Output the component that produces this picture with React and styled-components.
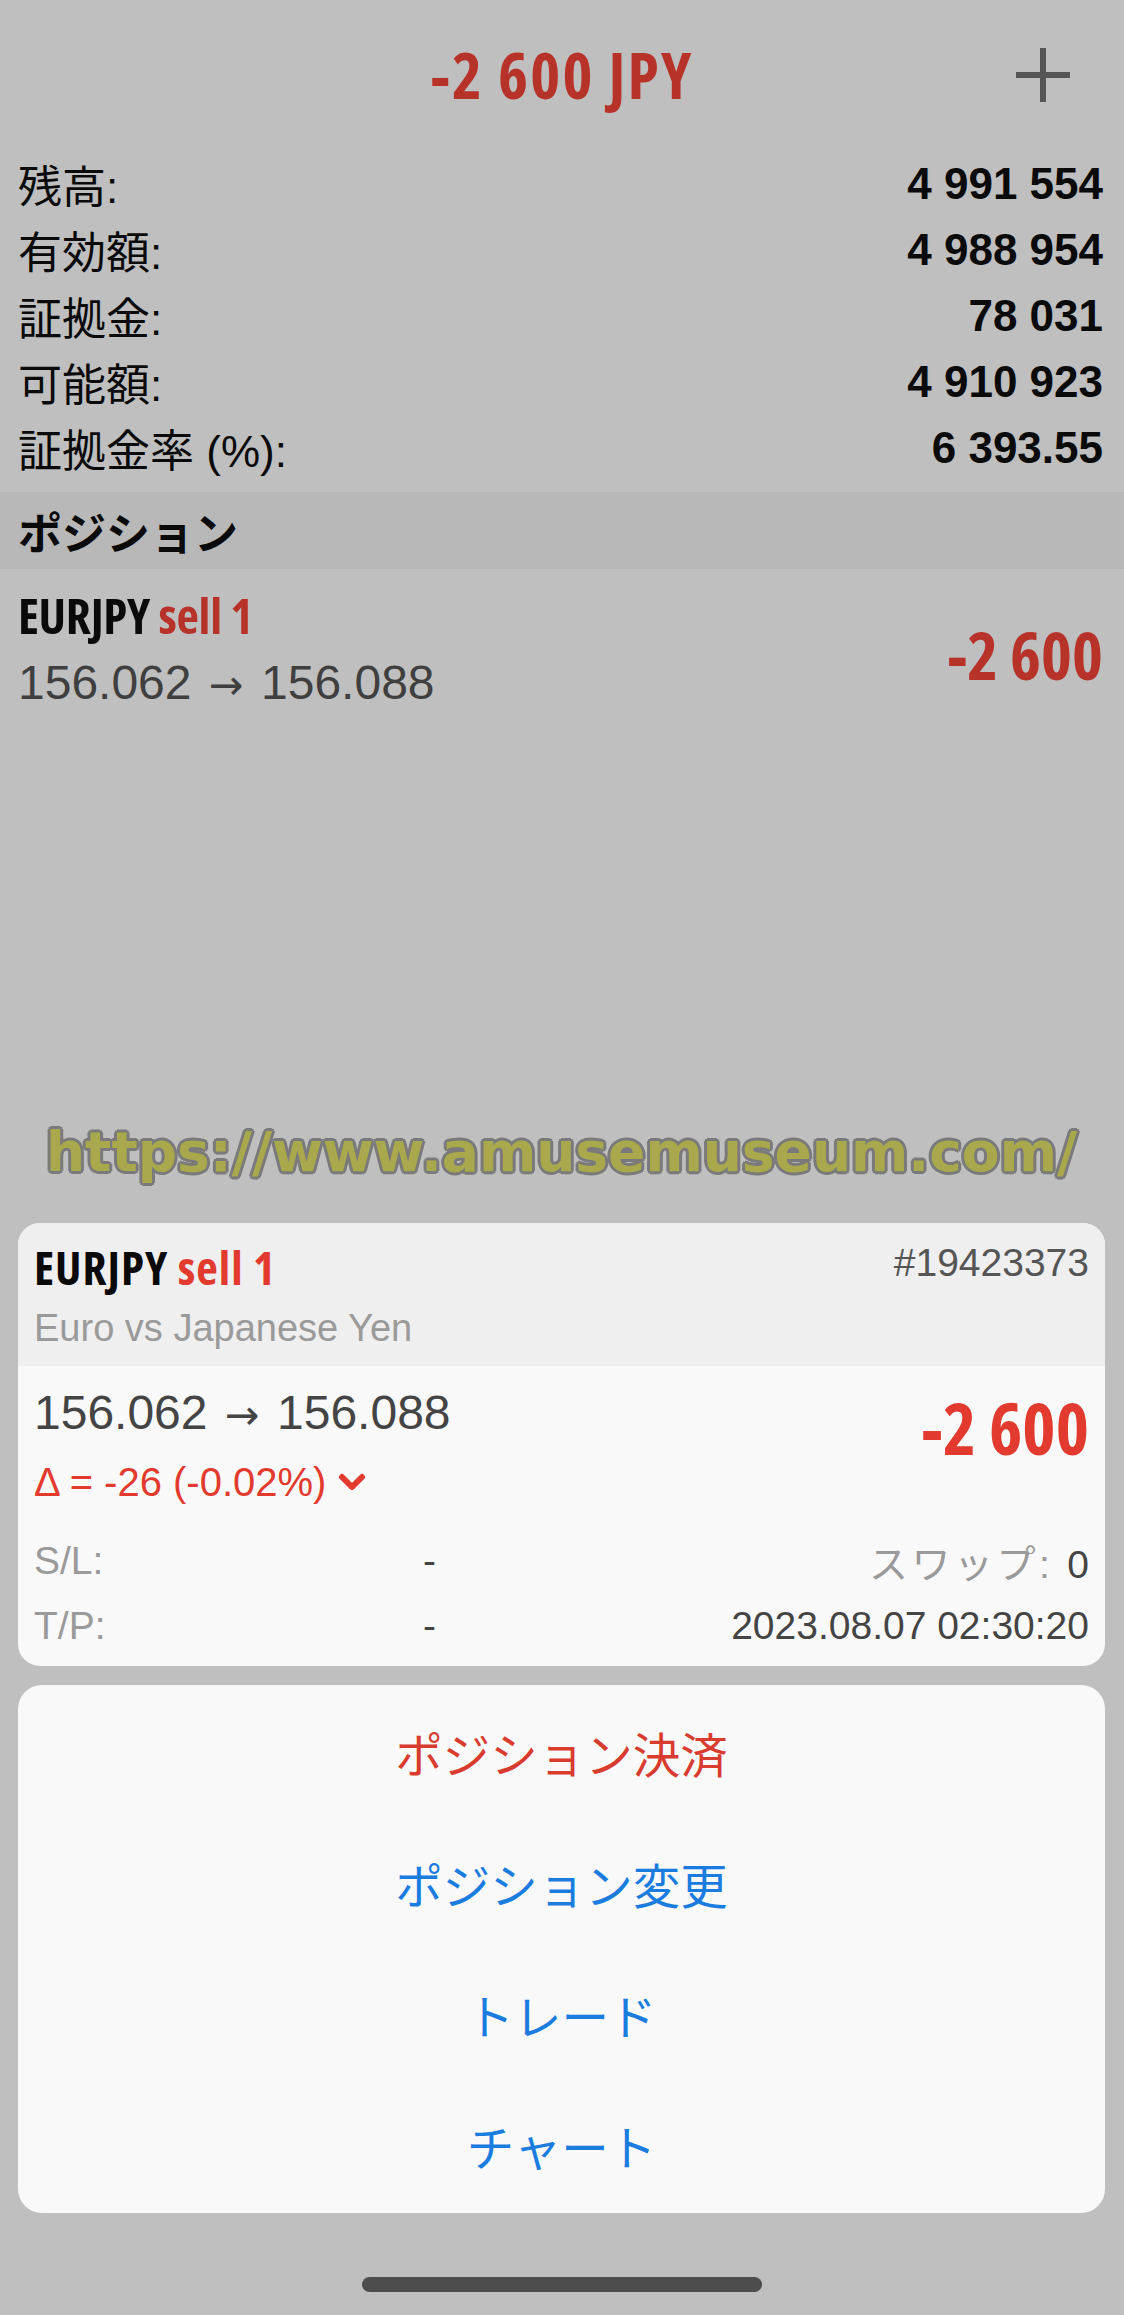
import React from 'react';
import styled, { createGlobalStyle } from 'styled-components';

const GlobalStyle = createGlobalStyle`
  html, body {
    margin: 0;
    padding: 0;
    background: #bfbfbf;
  }
  * { box-sizing: border-box; }
`;

const latin = `"Liberation Sans", "Noto Sans CJK JP", sans-serif`;
const cond = `"Open Sans", "Liberation Sans", sans-serif`;

const Screen = styled.div`
  width: 1124px;
  height: 2315px;
  display: flex;
  flex-direction: column;
  background: #bfbfbf;
  font-family: ${latin};
  overflow: hidden;
`;

const TopBar = styled.div`
  height: 151px;
  display: grid;
  grid-template-columns: 1fr auto 1fr;
  align-items: center;
  padding-bottom: 2px;
`;

const Title = styled.div`
  grid-column: 2;
  font-family: ${cond};
  font-stretch: 75%;
  font-weight: 700;
  font-size: 64px;
  letter-spacing: 2.2px;
  color: #b7332a;
`;

const PlusButton = styled.div`
  grid-column: 3;
  justify-self: end;
  margin-right: 54px;
  display: flex;
`;

const Summary = styled.div`
  padding: 0 21px 11px 18px;
`;

const SummaryRow = styled.div`
  height: 66px;
  display: flex;
  justify-content: space-between;
  align-items: center;
`;

const Label = styled.span`
  font-size: 44px;
  color: #0a0a0a;
`;

const Amount = styled.span`
  font-size: 44px;
  font-weight: 700;
  color: #0a0a0a;
`;

const SectionBand = styled.div`
  height: 77px;
  background: #b8b8b8;
  display: flex;
  align-items: center;
  padding-left: 18px;
  font-family: "Noto Sans CJK JP", sans-serif;
  font-weight: 700;
  font-size: 44px;
  color: #0a0a0a;
`;

const PositionRow = styled.div`
  display: flex;
  justify-content: space-between;
  align-items: center;
  padding: 16px 21px 0 18px;
`;

const Col = styled.div`
  display: flex;
  flex-direction: column;
`;

const Symbol = styled.div`
  font-family: ${cond};
  font-stretch: 75%;
  font-weight: 700;
  font-size: ${({ $size }) => $size}px;
  line-height: ${({ $lh }) => $lh}px;
  letter-spacing: ${({ $track }) => $track}px;
  color: #0a0a0a;
`;

const Side = styled.span`
  color: ${({ $dim }) => ($dim ? '#b7332a' : '#e23a2e')};
`;

const Prices = styled.div`
  font-size: ${({ $size }) => $size}px;
  line-height: ${({ $lh }) => $lh}px;
  color: ${({ $dim }) => ($dim ? '#3f3f3f' : '#444')};
`;

const Arrow = styled.span`
  font-family: "DejaVu Sans", sans-serif;
  font-size: 0.86em;
  margin: 0 0.1em;
`;

const Profit = styled.div`
  font-family: ${cond};
  font-stretch: 75%;
  font-weight: 700;
  font-size: ${({ $size }) => $size}px;
  line-height: ${({ $lh }) => $lh || 80}px;
  color: ${({ $dim }) => ($dim ? '#b7332a' : '#e23a2e')};
`;

const Lower = styled.div`
  margin-top: auto;
  display: flex;
  flex-direction: column;
  padding: 0 19px 0 18px;
`;

const Watermark = styled.div`
  text-align: center;
  font-family: "DejaVu Sans", sans-serif;
  font-weight: 700;
  font-size: 55px;
  line-height: 70px;
  color: #a9a84c;
  margin-bottom: 36px;
  text-shadow:
    -3px 0 0 #7a7a7a, 3px 0 0 #7a7a7a, 0 -3px 0 #7a7a7a, 0 3px 0 #7a7a7a,
    -2px -2px 0 #7a7a7a, 2px -2px 0 #7a7a7a, -2px 2px 0 #7a7a7a, 2px 2px 0 #7a7a7a;
`;

const Card = styled.div`
  background: #f9f9f9;
  border-radius: 22px;
  overflow: hidden;
`;

const CardHead = styled.div`
  background: #efefef;
  padding: 18px 16px 15px 16px;
`;

const HeadLine = styled.div`
  display: flex;
  justify-content: space-between;
  align-items: flex-start;
`;

const Ticket = styled.span`
  font-size: 39px;
  line-height: 44px;
  color: #555;
`;

const Description = styled.div`
  margin-top: 12px;
  font-size: 38px;
  line-height: 46px;
  color: #9a9a9a;
`;

const CardBody = styled.div`
  padding: 20px 16px 8px 16px;
`;

const QuoteRow = styled.div`
  display: flex;
  justify-content: space-between;
  align-items: flex-start;
`;

const Delta = styled.div`
  margin-top: 15px;
  display: flex;
  align-items: center;
  gap: 12px;
  font-size: 40px;
  line-height: 50px;
  color: #e23a2e;
`;

const DetailGrid = styled.div`
  margin-top: 21px;
  display: grid;
  grid-template-columns: 389px 1fr auto;
  grid-auto-rows: 65px;
  align-items: center;
  font-size: 39px;
`;

const Muted = styled.span`
  color: #9a9a9a;
  letter-spacing: ${({ $wide }) => ($wide ? '0.09em' : '0')};
`;

const Strong = styled.span`
  color: #444;
`;

const RightCell = styled.div`
  justify-self: end;
  display: flex;
  align-items: baseline;
  gap: 14px;
`;

const Sheet = styled.div`
  margin-top: 19px;
  background: #f9f9f9;
  border-radius: 24px;
  display: flex;
  flex-direction: column;
  padding: 2px 0;
`;

const Action = styled.div`
  height: 131px;
  display: flex;
  align-items: center;
  justify-content: center;
  font-family: "Noto Sans CJK JP", sans-serif;
  font-size: 47.5px;
  color: ${({ $danger }) => ($danger ? '#d83c2f' : '#1b7ce0')};
`;

const HomeArea = styled.div`
  height: 102px;
  display: flex;
  justify-content: center;
  align-items: flex-end;
  padding-bottom: 23px;
`;

const HomeBar = styled.div`
  width: 400px;
  height: 15px;
  border-radius: 8px;
  background: #4d4d4d;
`;

const summary = [
  ['残高:', '4 991 554'],
  ['有効額:', '4 988 954'],
  ['証拠金:', '78 031'],
  ['可能額:', '4 910 923'],
  ['証拠金率 (%):', '6 393.55'],
];

const actions = [
  { label: 'ポジション決済', danger: true },
  { label: 'ポジション変更' },
  { label: 'トレード' },
  { label: 'チャート' },
];

const PriceMove = ({ size, lh, dim }) => (
  <Prices $size={size} $lh={lh} $dim={dim}>
    156.062 <Arrow>→</Arrow> 156.088
  </Prices>
);

export default function App() {
  return (
    <>
      <GlobalStyle />
      <Screen>
        <TopBar>
          <Title>-2 600 JPY</Title>
          <PlusButton>
            <svg width="54" height="54" viewBox="0 0 54 54">
              <path d="M27 0V54M0 27H54" stroke="#555" strokeWidth="6" fill="none" />
            </svg>
          </PlusButton>
        </TopBar>

        <Summary>
          {summary.map(([label, value]) => (
            <SummaryRow key={label}>
              <Label>{label}</Label>
              <Amount>{value}</Amount>
            </SummaryRow>
          ))}
        </Summary>

        <SectionBand>ポジション</SectionBand>

        <PositionRow>
          <Col>
            <Symbol $size={49} $lh={60} $track={-0.3}>
              EURJPY <Side $dim>sell 1</Side>
            </Symbol>
            <PriceMove size={48} lh={76} dim />
          </Col>
          <Profit $size={66} $dim>-2 600</Profit>
        </PositionRow>

        <Lower>
          <Watermark>https://www.amusemuseum.com/</Watermark>

          <Card>
            <CardHead>
              <HeadLine>
                <Symbol $size={47} $lh={52} $track={1}>
                  EURJPY <Side>sell 1</Side>
                </Symbol>
                <Ticket>#19423373</Ticket>
              </HeadLine>
              <Description>Euro vs Japanese Yen</Description>
            </CardHead>
            <CardBody>
              <QuoteRow>
                <Col>
                  <PriceMove size={48} lh={54} />
                  <Delta>
                    Δ = -26 (-0.02%)
                    <svg width="28" height="20" viewBox="0 0 28 20">
                      <path d="M4 5L14 15L24 5" stroke="#e23a2e" strokeWidth="6" fill="none" strokeLinecap="round" strokeLinejoin="round" />
                    </svg>
                  </Delta>
                </Col>
                <Profit $size={71} $lh={84}>-2 600</Profit>
              </QuoteRow>
              <DetailGrid>
                <Muted>S/L:</Muted>
                <Strong>-</Strong>
                <RightCell>
                  <Muted $wide>スワップ:</Muted>
                  <Strong>0</Strong>
                </RightCell>
                <Muted>T/P:</Muted>
                <Strong>-</Strong>
                <RightCell>
                  <Strong>2023.08.07 02:30:20</Strong>
                </RightCell>
              </DetailGrid>
            </CardBody>
          </Card>

          <Sheet>
            {actions.map((a) => (
              <Action key={a.label} $danger={a.danger}>
                {a.label}
              </Action>
            ))}
          </Sheet>
        </Lower>

        <HomeArea>
          <HomeBar />
        </HomeArea>
      </Screen>
    </>
  );
}
